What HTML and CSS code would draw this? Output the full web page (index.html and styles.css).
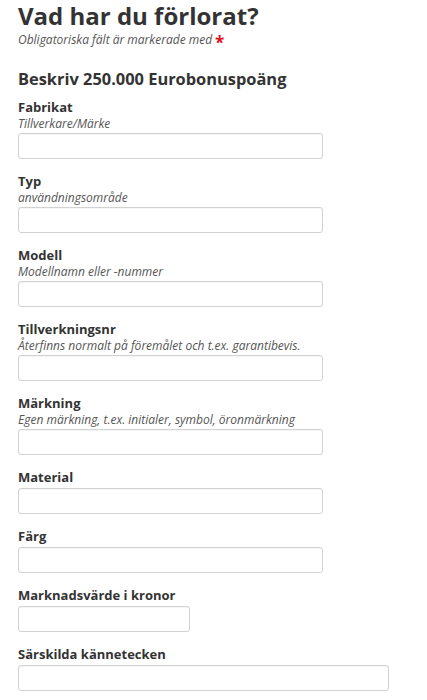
FILE: index.html
```html
<!DOCTYPE html>
<html lang="sv">
<head>
  <meta charset="UTF-8" />
  <meta name="viewport" content="width=device-width, initial-scale=1.0" />
  <title>Vad har du förlorat?</title>
  <link rel="stylesheet" href="styles.css">
</head>
<body>
  <div class="lost-form">
    <h1>Vad har du förlorat?</h1>
    <p class="required-note">Obligatoriska fält är markerade med<span class="star">*</span></p>

    <h2>Beskriv 250.000 Eurobonuspoäng</h2>

    <div class="field">
      <label for="fabrikat">Fabrikat</label>
      <span class="hint">Tillverkare/Märke</span>
      <input type="text" id="fabrikat" />
    </div>
    <div class="field">
      <label for="typ">Typ</label>
      <span class="hint">användningsområde</span>
      <input type="text" id="typ" />
    </div>
    <div class="field">
      <label for="modell">Modell</label>
      <span class="hint">Modellnamn eller -nummer</span>
      <input type="text" id="modell" />
    </div>
    <div class="field">
      <label for="tillvnr">Tillverkningsnr</label>
      <span class="hint">Återfinns normalt på föremålet och t.ex. garantibevis.</span>
      <input type="text" id="tillvnr" />
    </div>
    <div class="field">
      <label for="markning">Märkning</label>
      <span class="hint">Egen märkning, t.ex. initialer, symbol, öronmärkning</span>
      <input type="text" id="markning" />
    </div>
    <div class="field">
      <label for="material">Material</label>
      <input type="text" id="material" />
    </div>
    <div class="field">
      <label for="farg">Färg</label>
      <input type="text" id="farg" />
    </div>
    <div class="field">
      <label for="varde">Marknadsvärde i kronor</label>
      <input type="text" id="varde" class="short" />
    </div>
    <div class="field">
      <label for="kannetecken">Särskilda kännetecken</label>
      <input type="text" id="kannetecken" class="wide" />
    </div>
  </div>
</body>
</html>
```

FILE: styles.css
```css
body {
  margin: 0;
  padding: 0;
  font-family: "Open Sans", Arial, sans-serif;
  background: #fff;
  color: #333;
}
.lost-form {
  padding: 2px 18px 0;
}
h1 {
  margin: 0;
  font-size: 24px;
  line-height: 28px;
  font-weight: 700;
  color: #333;
}
.required-note {
  margin: 2px 0 0;
  height: 15px;
  font-size: 12px;
  line-height: 15px;
  font-style: italic;
  color: #555;
}
.star {
  margin-left: 3px;
  color: #e3101d;
  font-style: normal;
  font-size: 17px;
  line-height: 0;
  font-weight: 700;
  vertical-align: -5px;
}
h2 {
  margin: 21px 0 8px;
  font-size: 16.4px;
  line-height: 22px;
  font-weight: 700;
  color: #333;
}
.field {
  display: flex;
  flex-direction: column;
  align-items: flex-start;
  margin-bottom: 13px;
}
.field label {
  font-size: 13px;
  line-height: 18px;
  font-weight: 700;
  color: #333;
}
.hint {
  font-size: 12px;
  line-height: 15px;
  font-style: italic;
  color: #555;
}
.field input {
  box-sizing: border-box;
  margin-top: 2px;
  width: 305px;
  height: 26px;
  border: 1px solid #d2d2d2;
  border-radius: 3px;
  background: #fff;
  box-shadow: inset 0 1px 1px rgba(0,0,0,0.04);
  font-family: inherit;
  font-size: 13px;
  padding: 0 6px;
}
.field input.short {
  width: 172px;
}
.field input.wide {
  width: 371px;
}
```
